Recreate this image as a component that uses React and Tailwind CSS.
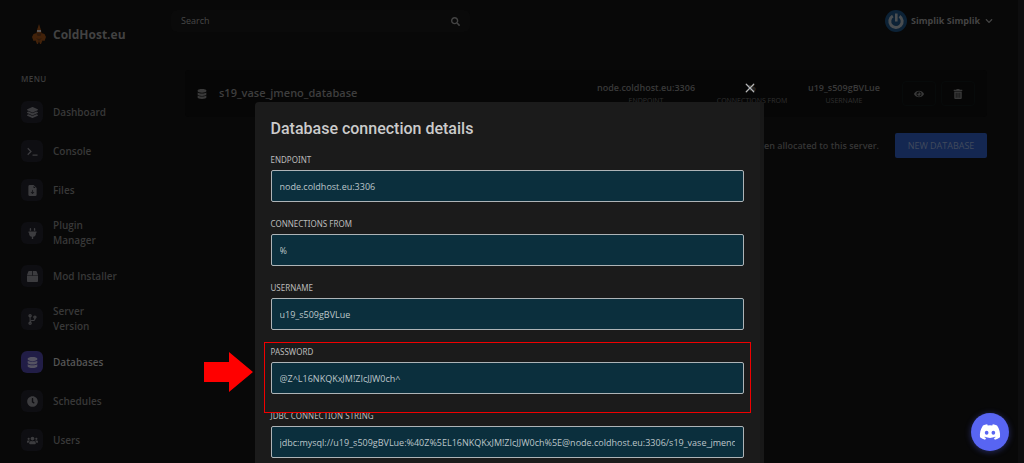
import { useState } from "react";
import {
  FaBox,
  FaChevronDown,
  FaClock,
  FaCodeBranch,
  FaDatabase,
  FaDiscord,
  FaEye,
  FaLayerGroup,
  FaPlug,
  FaSearch,
  FaTrashAlt,
  FaUsers,
} from "react-icons/fa";
import { BsFileEarmarkArrowDownFill } from "react-icons/bs";
import { X } from "lucide-react";

const PromptIcon = ({ className }) => (
  <svg viewBox="0 0 12 12" className={className} fill="none" stroke="currentColor" strokeWidth="1.400" aria-hidden="true">
    <path d="M0.800 2.500 L4.300 6 L0.800 9.500 M6 10 H11.500" />
  </svg>
);

const menu = [
  { label: "Dashboard", icon: FaLayerGroup },
  { label: "Console", icon: PromptIcon },
  { label: "Files", icon: BsFileEarmarkArrowDownFill },
  { label: "Plugin Manager", icon: FaPlug },
  { label: "Mod Installer", icon: FaBox },
  { label: "Server Version", icon: FaCodeBranch },
  { label: "Databases", icon: FaDatabase, active: true },
  { label: "Schedules", icon: FaClock },
  { label: "Users", icon: FaUsers },
];

const fields = [
  { id: "endpoint", label: "Endpoint", value: "node.coldhost.eu:3306" },
  { id: "connections", label: "Connections from", value: "%" },
  { id: "username", label: "Username", value: "u19_s509gBVLue" },
  { id: "password", label: "Password", value: "@Z^L16NKQKxJM!ZIcJJW0ch^", marked: true },
  {
    id: "jdbc",
    label: "JDBC Connection String",
    value: "jdbc:mysql://u19_s509gBVLue:%40Z%5EL16NKQKxJM!ZIcJJW0ch%5E@node.coldhost.eu:3306/s19_vase_jmeno_database",
  },
];

const Logo = () => (
  <svg viewBox="0 0 14 21" className="h-[21px] w-[14px]" aria-hidden="true">
    <path d="M7 0 L9 6 L9.500 9 L12.500 10 L14 13 L12.500 17 L10.500 16.500 L9 20 L8 20 L7 17 L6 20 L5 20 L3.500 16.500 L1.500 17 L0 13 L1.500 10 L4.500 9 L5 6 Z" fill="#42220a" />
    <path d="M4.500 9 H9.500 L8.500 12 H5.500 Z M4 14 L7 15 L10 14 L7 17 Z" fill="#2f1a0c" />
    <path d="M5 6 H9 V8 H5 Z" fill="#5c5654" />
  </svg>
);

const Avatar = () => (
  <svg viewBox="0 0 22 22" className="size-[22px]" aria-hidden="true">
    <circle cx="11" cy="11" r="11" fill="#0c2236" />
    <path d="M7.800 6 A6.200 6.200 0 1 0 14.500 6.200" fill="none" stroke="#4a4e51" strokeWidth="3" />
    <path d="M11.300 3.500 V11.500" stroke="#4a4e51" strokeWidth="2.600" />
  </svg>
);

const Sidebar = () => (
  <aside className="w-[171px] shrink-0 pl-[21px]">
    <a href="#home" className="flex items-center gap-[7px] pt-6 pl-[11px] text-xs leading-5 font-bold text-[#424242]">
      <Logo />
      ColdHost.eu
    </a>
    <h2 className="mt-7 text-[8px] leading-3 font-semibold tracking-wider text-[#3c3c3c]">MENU</h2>
    <nav className="mt-4 flex flex-col gap-[17px]">
      {menu.map(({ label, icon: Icon, active }) => (
        <a key={label} href={`#${label}`} className="flex items-center gap-[10px]">
          <span
            className={`flex size-[22px] shrink-0 items-center justify-center rounded-md ${
              active ? "bg-[#211d46] text-[#555362]" : "bg-[#0e0e12] text-[#3c3c3f]"
            }`}
          >
            <Icon className="size-[11px]" />
          </span>
          <span
            className={`w-[67px] text-[10px] leading-[15px] font-semibold ${
              active ? "text-[#555555]" : "text-[#383838]"
            }`}
          >
            {label}
          </span>
        </a>
      ))}
    </nav>
  </aside>
);

const Header = () => (
  <header className="flex items-center justify-between pt-[10px] pr-[25px]">
    <label className="flex h-[22px] w-[299px] items-center rounded-md bg-[#0a0a0a] px-[10px] text-[#444444]">
      <input
        type="text"
        aria-label="Search"
        placeholder="Search"
        className="min-w-0 flex-1 bg-transparent text-[9px] font-medium outline-none placeholder:text-[#484848]"
      />
      <FaSearch className="size-[9px]" />
    </label>
    <button type="button" className="flex items-center gap-1 text-[9px] font-bold text-[#444444]">
      <Avatar />
      Simplik Simplik
      <FaChevronDown className="ml-px size-2" />
    </button>
  </header>
);

const Stat = ({ value, label, className }) => (
  <div className={`flex flex-col items-center whitespace-nowrap ${className}`}>
    <p className="text-[9px] leading-[14px] font-semibold text-[#3a3a3a]">{value}</p>
    <p className="text-[7px] leading-[12px] font-medium text-[#303030] uppercase">{label}</p>
  </div>
);

const DatabaseRow = ({ onView }) => (
  <div className="flex h-[47px] items-center rounded-sm bg-[#060606] pr-3 pl-3">
    <FaDatabase className="size-[10px] text-[#3a3a3a]" />
    <p className="ml-3 flex-1 text-[11px] font-semibold text-[#3e3e3e]">s19_vase_jmeno_database</p>
    <Stat value="node.coldhost.eu:3306" label="Endpoint" className="w-[106px]" />
    <Stat value="%" label="Connections from" className="w-[106px]" />
    <Stat value="u19_s509gBVLue" label="Username" className="w-[78px]" />
    <button
      type="button"
      aria-label="View details"
      onClick={onView}
      className="ml-[19px] flex h-[25px] w-[34px] items-center justify-center rounded-sm border border-[#070a0a] text-[#383838]"
    >
      <FaEye className="size-[10px]" />
    </button>
    <button
      type="button"
      aria-label="Delete database"
      className="ml-[5px] flex h-[25px] w-[34px] items-center justify-center rounded-sm border border-[#070a0a] text-[#383838]"
    >
      <FaTrashAlt className="size-[10px]" />
    </button>
  </div>
);

// Outline and arrow pointing at the field the user has to copy
const Marker = () => (
  <>
    <span className="pointer-events-none absolute -inset-x-[7px] -top-[5px] -bottom-[19px] z-10 border border-[#f00000]" />
    <svg viewBox="0 0 49 40" className="absolute top-[5px] right-full mr-[18px] h-10 w-[49px]" aria-hidden="true">
      <path d="M0 10 H25 V0 L49 20 L25 40 V30 H0 Z" fill="#ff0000" />
    </svg>
  </>
);

const DetailsModal = ({ onClose }) => (
  <div className="fixed inset-y-0 right-1.5 left-0 overflow-hidden">
    <div role="dialog" aria-labelledby="details-title" className="mx-auto w-1/2 pt-[82px]">
      <div className="flex justify-end pr-2">
        <button type="button" aria-label="Close" onClick={onClose} className="mb-2 text-[#b4b4b4]">
          <X className="size-3 scale-125" strokeWidth={2} />
        </button>
      </div>
      <div className="flex rounded-sm bg-[#1b1b1b]">
        <div className="min-w-0 flex-1 pt-[15px] pb-8 pl-4">
          <h1 id="details-title" className="font-['Roboto'] text-base leading-6 font-medium text-[#cbcbcb]">
            Database connection details
          </h1>
          <form className="mt-[14px] flex flex-col gap-[17px]">
            {fields.map((field) => (
              <div key={field.id} className="relative flex flex-col">
                <label
                  htmlFor={field.id}
                  className="mb-[6px] font-['Noto_Sans'] text-[8px] leading-[9px] text-[#bcbcbc] uppercase"
                >
                  {field.label}
                </label>
                <input
                  id={field.id}
                  type="text"
                  readOnly
                  defaultValue={field.value}
                  className="h-8 w-full rounded-xs border border-[#aeb4b7] bg-[#0b2f3d] px-2 text-[9px] text-[#bdc6ca] outline-none"
                />
                {field.marked && <Marker />}
              </div>
            ))}
          </form>
        </div>
        <div className="ml-4 w-1 bg-[#181818]" />
      </div>
    </div>
  </div>
);

const App = () => {
  const [open, setOpen] = useState(true);

  return (
    <div className="flex h-screen overflow-hidden bg-[#080808] font-['Open_Sans','Noto_Sans',sans-serif]">
      <Sidebar />
      <div className="min-w-0 flex-1">
        <Header />
        <main className="mt-[38px] pr-[31px] pl-[14px]">
          <DatabaseRow onView={() => setOpen(true)} />
          <div className="mt-4 flex items-center justify-end gap-4">
            <p className="text-[9px] font-semibold text-[#363636]">
              1 of 2 databases have been allocated to this server.
            </p>
            <button
              type="button"
              className="h-[25px] w-[92px] rounded-xs bg-[#142751] text-[9px] font-medium text-[#414a5c]"
            >
              NEW DATABASE
            </button>
          </div>
        </main>
      </div>
      <div className="w-1.5 shrink-0 bg-[#0d0d0e]" />

      {open && <DetailsModal onClose={() => setOpen(false)} />}

      <a
        href="#discord"
        aria-label="Discord"
        className="fixed right-[15px] bottom-3 flex size-[38px] items-center justify-center rounded-full bg-[#5865f2] text-white shadow-[0_1px_6px_#5865f266]"
      >
        <FaDiscord className="size-[22px]" />
      </a>
    </div>
  );
};

export default App;
